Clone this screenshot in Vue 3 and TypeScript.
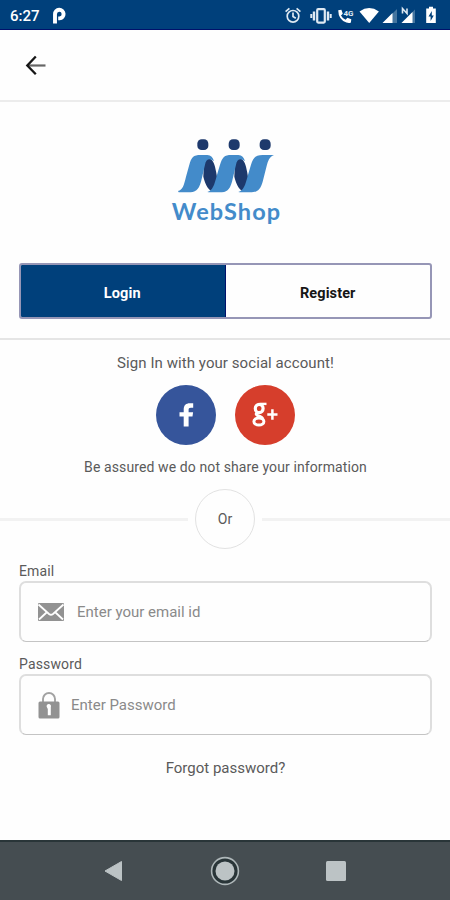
<script setup lang="ts">
import { ref } from 'vue'

type Tab = 'Login' | 'Register'

const tabs: Tab[] = ['Login', 'Register']
const active = ref<Tab>('Login')
const email = ref('')
const password = ref('')
</script>

<template>
  <div class="screen">
    <div class="status">
      <span class="clock">6:27</span>
      <svg class="parking" viewBox="0 0 14 17" width="14" height="17">
        <path d="M3 16.500V7.200A4.300 4.300 0 1 1 7.600 11.400H6.200" fill="none" stroke="#fff" stroke-width="3.900" />
      </svg>
      <svg class="indicators" viewBox="0 0 180 30" width="180" height="30">
        <g fill="none" stroke="#dfe9f2" stroke-width="1.700">
          <circle cx="23" cy="16.300" r="5.800" />
          <path d="M23 12.500v4l2.800 1.800M15.600 11.700l3.800-3.300M30.400 11.700l-3.800-3.300" />
          <rect x="47.200" y="9.200" width="7.600" height="13.400" rx="1" stroke-width="2.200" />
          <path d="M44 11.500v9M58 11.500v9" stroke-width="2.400" />
          <path d="M41.300 14v4M60.700 14v4" stroke-width="2" />
        </g>
        <path d="M68.200 10.200l3.200-.5 1.400 4-1.800 1.700q1.500 3 4.600 4.400l1.800-2 3.900 1.400-.4 3.200q-1.500 1.200-4.500.2-8-3-8.200-12.400z" fill="#fff" />
        <text class="tiny" x="73.500" y="15.500">4G</text>
        <path d="M89.500 11.400q9.700-6.600 19.400 0L99.200 23z" fill="#fff" />
        <path d="M113 23L127 9v14z" fill="#45759f" />
        <path d="M112.500 23L122.500 13v10z" fill="#fff" />
        <path d="M131.500 23L145 9.500V23z" fill="#45759f" />
        <path d="M131.500 23L142.500 12V23z" fill="#fff" />
        <path d="M132.500 13.500v-5l4.500 5v-5" stroke="#dfe9f2" stroke-width="1.600" fill="none" />
        <path d="M159 8.600V6.800h4v1.800h2.800V23h-9.600V8.600z" fill="#fff" />
        <path d="M161.800 11l-3.300 5.400h2.100V21l3.200-5.500h-2z" fill="#00407b" />
      </svg>
    </div>

    <header class="header">
      <button class="back" aria-label="Back">
        <svg viewBox="0 0 22 22" width="22" height="22" fill="none">
          <path d="M2 11.500h18.500" stroke="#666" stroke-width="2.200" />
          <path d="M10.800 2.500L2.300 11.500l8.500 8.700" stroke="#161616" stroke-width="2.300" />
        </svg>
      </button>
    </header>

    <section class="brand">
      <svg viewBox="48 27 300 168" width="100" height="56">
        <g fill="#1d396c">
          <rect x="112" y="28" width="33" height="32" rx="13" />
          <rect x="206" y="28" width="33" height="32" rx="13" />
          <rect x="299" y="28" width="33" height="32" rx="13" />
        </g>
        <g fill="#1d396c">
          <path d="M132 86C148 78 160 90 165 110C171 134 172 154 178 168L162 186C146 184 136 164 130 140Z" />
          <path d="M225 86C241 78 253 90 258 110C264 134 265 154 271 168L255 186C239 184 229 164 223 140Z" />
        </g>
        <g fill="#438bca">
          <path d="M54 183C68 180 72 165 78 140L88 104C94 82 100 75 122 75H142C153 76 159 82 162 94C152 84 138 84 135 104L123 155C116 180 106 187 84 187H56Z" />
          <path d="M142 186C158 182 163 165 170 138L180 104C187 82 193 75 214 75H235C246 76 252 82 255 94C245 84 231 84 228 104L216 155C209 180 200 187 178 187H146Z" />
          <path d="M235 186C251 182 256 165 263 138L273 104C280 82 287 75 308 75H342C328 80 324 92 319 112L308 155C301 180 291 187 270 187H239Z" />
        </g>
      </svg>
      <span class="brand-name">WebShop</span>
    </section>

    <div class="tabs">
      <button
        v-for="tab in tabs"
        :key="tab"
        class="tab"
        :class="{ active: tab === active }"
        @click="active = tab"
      >{{ tab }}</button>
    </div>

    <section class="social">
      <p class="social-title">Sign In with your social account!</p>
      <div class="social-buttons">
        <button class="round facebook" aria-label="Facebook">
          <svg viewBox="0 0 60 60" width="60" height="60">
            <path d="M27.700 41.500V31.500H23.500v-4.300h4.200v-2.800c0-4.100 2.400-6.100 6-6.100h3.500v4.400h-2.300c-1.800 0-2.300.8-2.300 2.300v2.200h4.500l-.6 4.300h-3.900v10z" fill="#fff" />
          </svg>
        </button>
        <button class="round google" aria-label="Google Plus">
          <svg viewBox="0 0 60 60" width="60" height="60" fill="none" stroke="#fff">
            <ellipse cx="24.200" cy="23.500" rx="3.900" ry="4.200" stroke-width="3.200" />
            <path d="M25 18.900h6.500" stroke-width="2.400" />
            <path d="M22.500 27.500c-3 2 0 3 2.500 4 2 .8 2.500 1.400 3 2.500" stroke-width="3" />
            <ellipse cx="23.900" cy="36.500" rx="5" ry="3.500" stroke-width="3" />
            <path d="M32.300 29.500h10.200M37.400 24.300v10.400" stroke-width="2.500" />
          </svg>
        </button>
      </div>
      <p class="social-note">Be assured we do not share your information</p>
    </section>

    <div class="or-row">
      <span class="rule"></span>
      <span class="or">Or</span>
      <span class="rule"></span>
    </div>

    <form class="form" @submit.prevent>
      <label class="label" for="email">Email</label>
      <div class="field">
        <svg viewBox="0 0 28 20" width="28" height="20">
          <rect x="1" y="1" width="26" height="18" rx="1" fill="#929292" />
          <path d="M1.500 2.500L12 12q2 1.500 4 0L26.500 2.500M2 17.500l7.500-7M26 17.500l-7.500-7" fill="none" stroke="#fff" stroke-width="1.800" />
        </svg>
        <input id="email" v-model="email" class="input" type="text" placeholder="Enter your email id">
      </div>
      <label class="label second" for="password">Password</label>
      <div class="field password-field">
        <svg viewBox="0 0 22 28" width="22" height="28">
          <path d="M5 12V8a6 6 0 0 1 12 0V12" fill="none" stroke="#a2a2a2" stroke-width="1.900" />
          <rect x=".5" y="10.500" width="21" height="17" rx="1.500" fill="#929292" />
          <path d="M8.800 16a2.200 2.200 0 1 1 4 0v8.200H9.800V18z" fill="#fff" />
        </svg>
        <input id="password" v-model="password" class="input" type="password" placeholder="Enter Password">
      </div>
      <a class="forgot">Forgot password?</a>
    </form>

    <nav class="nav">
      <svg viewBox="0 0 30 30" width="30" height="30"><path d="M6 15L22.500 5.500v19z" fill="#bcc3c5" stroke="#bcc3c5" stroke-linejoin="round" /></svg>
      <svg viewBox="0 0 30 30" width="30" height="30">
        <circle cx="15" cy="15" r="13.400" fill="#293538" stroke="#aeb7b9" stroke-width="1.600" />
        <circle cx="15" cy="15" r="9.500" fill="#bcc3c5" />
      </svg>
      <svg viewBox="0 0 30 30" width="30" height="30"><rect x="5" y="5" width="20" height="20" rx="1.500" fill="#bcc3c5" /></svg>
    </nav>
  </div>
</template>

<style>
body {
  margin: 0;
  background: #fefefe;
}
</style>

<style scoped>
.screen {
  display: flex;
  flex-direction: column;
  width: 450px;
  height: 900px;
  overflow: hidden;
  box-sizing: border-box;
  background: #fefefe;
  color: #5a5a5a;
  font-family: Roboto, "Liberation Sans", sans-serif;
}
.screen * {
  box-sizing: border-box;
}
button {
  padding: 0;
  border: 0;
  background: none;
  font: inherit;
}
svg {
  display: block;
}
p {
  margin: 0;
}
.status {
  display: flex;
  align-items: center;
  flex: none;
  height: 30px;
  padding-left: 10px;
  background: #00407b;
  border-bottom: 1px solid #00116b;
  color: #fff;
}
.clock {
  width: 42px;
  padding-top: 2px;
  font-size: 15px;
  font-weight: 500;
}
.parking {
  margin-top: 2px;
}
.indicators {
  margin-left: auto;
}
.tiny {
  fill: #dfe9f2;
  font-size: 8px;
  font-weight: 700;
}
.header {
  display: flex;
  align-items: center;
  flex: none;
  height: 72px;
  padding: 0 0 0 25px;
  border-bottom: 2px solid #ececec;
}
.brand {
  display: flex;
  flex-direction: column;
  align-items: center;
  flex: none;
  height: 161px;
  padding: 37px 0 0 2px;
}
.brand-name {
  margin-top: 2px;
  padding-left: 1px;
  color: #438bca;
  font-family: Lato, sans-serif;
  font-size: 23.500px;
  font-weight: 700;
  line-height: 28px;
  letter-spacing: 1.100px;
}
.tabs {
  display: flex;
  flex: none;
  height: 56px;
  margin: 0 18px 0 19px;
  overflow: hidden;
  border: 2px solid #9696b6;
  border-radius: 3px;
}
.tab {
  flex: 1;
  padding-top: 4px;
  color: #161616;
  font-size: 14.500px;
  font-weight: 700;
  letter-spacing: 0.100px;
}
.tab.active {
  margin: -1px 0 -1px -1px;
  padding-top: 5px;
  border-right: 1px solid #00116b;
  border-bottom: 1px solid #00116b;
  background: #00407b;
  color: #fff;
}
.social {
  display: flex;
  flex-direction: column;
  align-items: center;
  flex: none;
  height: 150px;
  margin-top: 19px;
  padding-top: 13px;
  border-top: 2px solid #e5e5e5;
}
.social-title {
  padding-left: 1px;
  font-size: 15px;
  line-height: 20px;
  letter-spacing: 0.070px;
}
.social-buttons {
  display: flex;
  gap: 19px;
  margin-top: 12px;
}
.round {
  width: 60px;
  height: 60px;
  border-radius: 50%;
}
.facebook {
  background: #36559b;
}
.google {
  background: #d63e2c;
}
.social-note {
  padding-left: 1px;
  margin-top: 12px;
  font-size: 14px;
  line-height: 20px;
  letter-spacing: 0.110px;
}
.or-row {
  display: flex;
  align-items: center;
  flex: none;
  gap: 7px;
  height: 62px;
}
.rule {
  flex: 1;
  height: 3px;
  background: #f2f2f2;
}
.or {
  display: flex;
  align-items: center;
  justify-content: center;
  width: 60px;
  height: 60px;
  border: 1.500px solid #e2e2e2;
  border-radius: 50%;
  font-size: 14px;
}
.form {
  display: flex;
  flex-direction: column;
  flex: 1;
  padding: 11px 18px 0 19px;
}
.label {
  height: 20px;
  font-size: 14px;
  line-height: 20px;
  letter-spacing: 0.150px;
}
.second {
  margin-top: 12px;
}
.field {
  display: flex;
  align-items: center;
  flex: none;
  gap: 12px;
  height: 61px;
  padding-left: 16px;
  border: 2px solid #dedede;
  border-bottom: 1px solid #c4c4c4;
  border-radius: 7px;
}
.password-field {
  gap: 11px;
  padding-left: 17px;
}
.input {
  flex: 1;
  min-width: 0;
  padding: 0;
  border: 0;
  outline: 0;
  background: none;
  font: 15px Roboto, sans-serif;
}
.input::placeholder {
  color: #8a8a8a;
  opacity: 1;
}
.forgot {
  align-self: center;
  margin-top: 23px;
  font-size: 15px;
  line-height: 20px;
}
.nav {
  display: flex;
  align-items: center;
  justify-content: center;
  flex: none;
  gap: 81px;
  height: 60px;
  border-top: 2px solid #293538;
  background: #454d51;
}
</style>
